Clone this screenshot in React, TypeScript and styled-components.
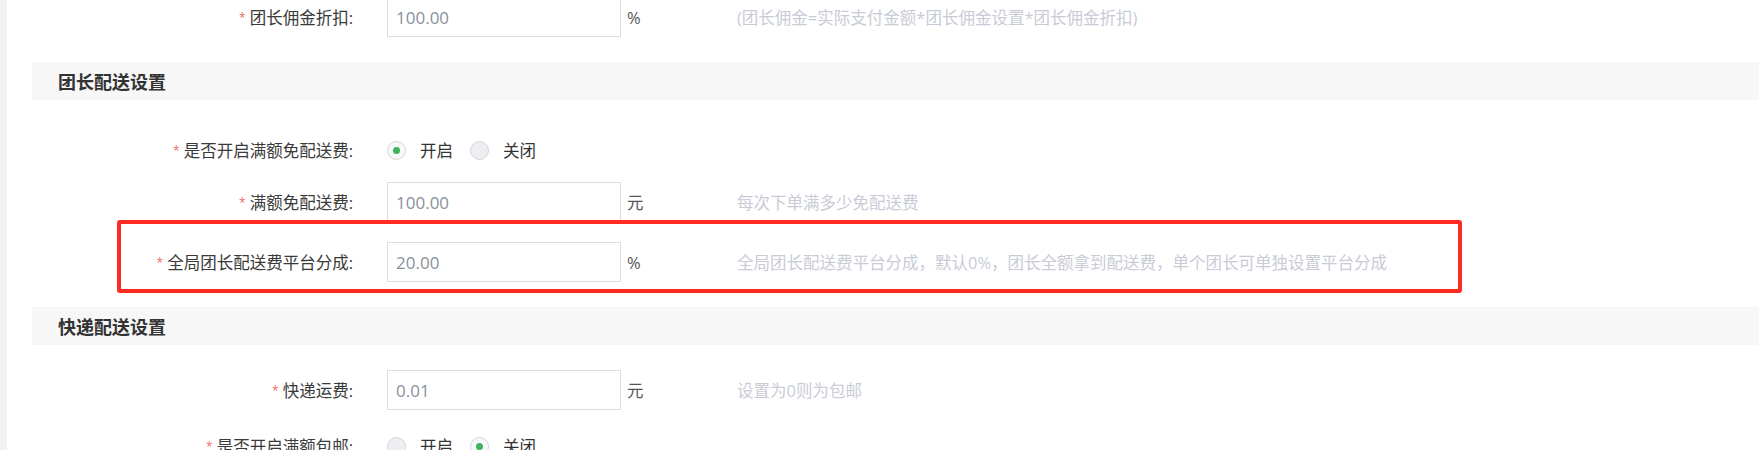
import React from 'react';
import styled, { createGlobalStyle } from 'styled-components';

const GlobalStyle = createGlobalStyle`
  html, body {
    margin: 0;
    padding: 0;
    background: #fff;
    overflow: hidden;
  }
  body {
    font-family: "Open Sans", "Noto Sans CJK SC", sans-serif;
  }
`;

const Page = styled.div`
  display: flex;
  height: 450px;
  overflow: hidden;
`;

const SideStrip = styled.div`
  flex: none;
  width: 7px;
  background: #f2f2f2;
`;

const Main = styled.div`
  flex: 1;
  padding-left: 25px;
  margin-top: -3px;
`;

const SectionHeader = styled.div`
  height: 38px;
  padding-left: 26px;
  display: flex;
  align-items: center;
  background: #f7f7f7;
  font-size: 18px;
  font-weight: 600;
  color: #333;
`;

// padding (not margin) so the gap above the next header doesn't collapse
const SectionBody = styled.div<{ $pt: number }>`
  padding-top: ${p => p.$pt}px;
  padding-bottom: 5px;
`;

const FormItem = styled.div<{ $radio?: boolean }>`
  position: relative;
  display: flex;
  align-items: center;
  height: ${p => (p.$radio ? 32 : 40)}px;
  margin-bottom: ${p => (p.$radio ? 16 : 20)}px;
`;

// red annotation frame drawn over the row
const Highlight = styled.div`
  position: absolute;
  left: 85px;
  top: -22px;
  width: 1345px;
  height: 73px;
  box-sizing: border-box;
  border: 4px solid #ff2a22;
  border-radius: 3px;
  pointer-events: none;
`;

const Label = styled.label`
  flex: none;
  width: 355px;
  box-sizing: border-box;
  padding-right: 34px;
  text-align: right;
  font-size: 16.5px;
  color: #3a3a3a;
`;

const Star = styled.span`
  color: #ec6d6d;
  font-size: 12px;
  margin-right: 4px;
  vertical-align: 2px;
`;

const Input = styled.input`
  flex: none;
  width: 234px;
  height: 40px;
  box-sizing: border-box;
  border: 1px solid #dcdcdc;
  padding: 0 8px;
  font-family: inherit;
  font-size: 17px;
  color: #8a909b;
  outline: none;
`;

const Unit = styled.span`
  flex: none;
  width: 116px;
  box-sizing: border-box;
  padding-left: 6px;
  font-size: 16.5px;
  color: #555;
`;

const Help = styled.span`
  font-size: 16.5px;
  color: #c9ccd6;
`;

const RadioGroup = styled.div`
  display: flex;
  align-items: center;
`;

const RadioOption = styled.label`
  display: flex;
  align-items: center;
  margin-right: 17px;
  font-size: 16.5px;
  color: #333;
`;

const RadioCircle = styled.span<{ $checked?: boolean }>`
  width: 19px;
  height: 19px;
  box-sizing: border-box;
  border-radius: 50%;
  border: 1px solid #d3d6dc;
  background: ${p => (p.$checked ? '#f7f8fa' : '#eceef2')};
  margin-right: 14px;
  display: flex;
  align-items: center;
  justify-content: center;

  &::after {
    content: '';
    display: ${p => (p.$checked ? 'block' : 'none')};
    width: 7px;
    height: 7px;
    border-radius: 50%;
    background: #3fb25a;
  }
`;

type InputRowProps = {
  label: string;
  value: string;
  unit: string;
  help: string;
  highlight?: boolean;
};

const InputRow: React.FC<InputRowProps> = ({ label, value, unit, help, highlight }) => (
  <FormItem>
    <Label>
      <Star>*</Star>
      {label}:
    </Label>
    <Input defaultValue={value} />
    <Unit>{unit}</Unit>
    <Help>{help}</Help>
    {highlight && <Highlight />}
  </FormItem>
);

const RadioRow: React.FC<{ label: string; on: boolean }> = ({ label, on }) => (
  <FormItem $radio>
    <Label>
      <Star>*</Star>
      {label}:
    </Label>
    <RadioGroup>
      <RadioOption>
        <RadioCircle $checked={on} />
        开启
      </RadioOption>
      <RadioOption>
        <RadioCircle $checked={!on} />
        关闭
      </RadioOption>
    </RadioGroup>
  </FormItem>
);

export default function App() {
  return (
    <>
      <GlobalStyle />
      <Page>
        <SideStrip />
        <Main>
          <SectionBody $pt={0}>
            <InputRow
              label="团长佣金折扣"
              value="100.00"
              unit="%"
              help="(团长佣金=实际支付金额*团长佣金设置*团长佣金折扣)"
            />
          </SectionBody>

          <SectionHeader>团长配送设置</SectionHeader>
          <SectionBody $pt={34}>
            <RadioRow label="是否开启满额免配送费" on />
            <InputRow label="满额免配送费" value="100.00" unit="元" help="每次下单满多少免配送费" />
            <InputRow
              label="全局团长配送费平台分成"
              value="20.00"
              unit="%"
              help="全局团长配送费平台分成，默认0%，团长全额拿到配送费，单个团长可单独设置平台分成"
              highlight
            />
          </SectionBody>

          <SectionHeader>快递配送设置</SectionHeader>
          <SectionBody $pt={25}>
            <InputRow label="快递运费" value="0.01" unit="元" help="设置为0则为包邮" />
            <RadioRow label="是否开启满额包邮" on={false} />
          </SectionBody>
        </Main>
      </Page>
    </>
  );
}
